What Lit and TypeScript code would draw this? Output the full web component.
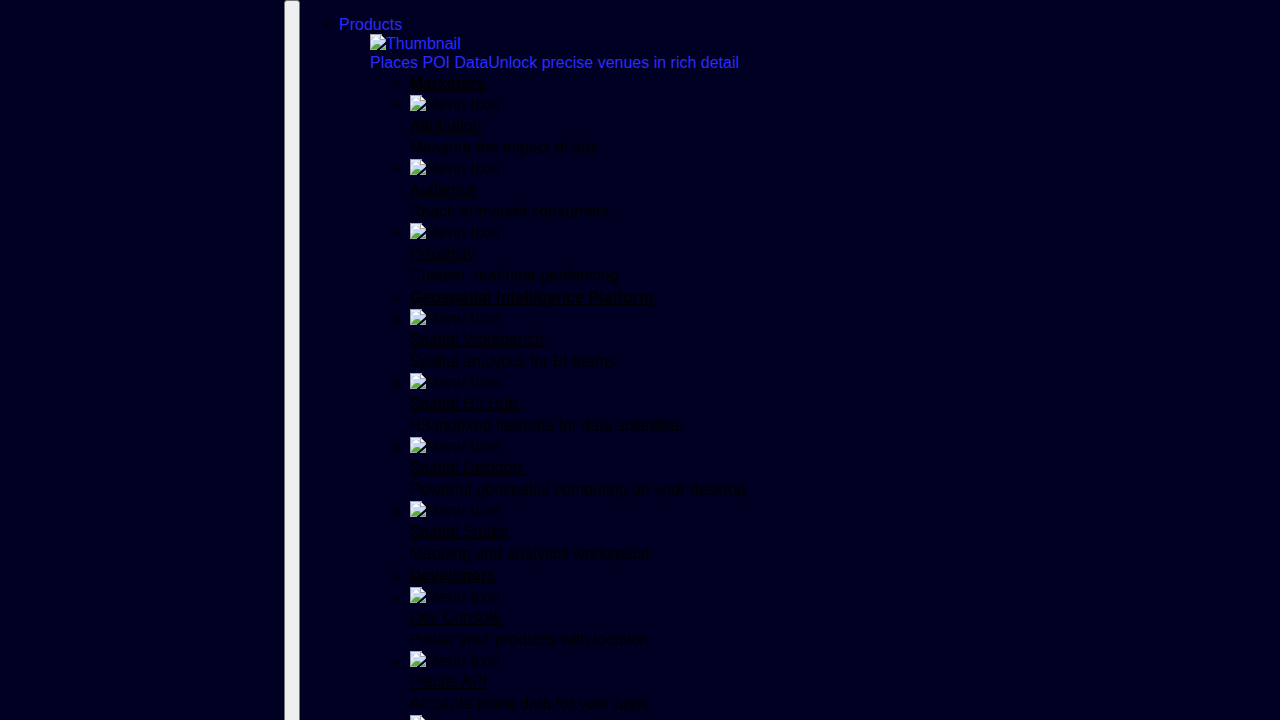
import { LitElement, html, css, svg, nothing } from "lit";
import { customElement } from "lit/decorators.js";

interface Entry {
  title?: string;
  text?: string;
}

interface Group {
  heading: string;
  entries: Entry[];
}

const GROUPS: Group[] = [
  {
    heading: "Marketers",
    entries: [
      { title: "Attribution", text: "Measure the impact of ads" },
      { title: "Audience", text: "Reach in-market consumers" },
      { title: "Proximity", text: "Custom, real-time geofencing" },
    ],
  },
  {
    heading: "Geospatial Intelligence Platform",
    entries: [
      { title: "Spatial Workbench\u00a0", text: "Spatial analytics for BI teams" },
      { title: "Spatial H3 Hub\u00a0", text: "H3-indexed features for data scientists" },
      { title: "Spatial Desktop\u00a0", text: "Powerful geospatial computing on your desktop" },
      { title: "Spatial Studio", text: "Mapping and analytics workspace" },
    ],
  },
  {
    heading: "Developers",
    entries: [
      { title: "Dev Console", text: "Power your products with location" },
      { title: "Places API", text: "Accurate place data for your apps" },
      {},
    ],
  },
];

@customElement("missing-image")
export class MissingImage extends LitElement {
  static styles = css`
    :host {
      display: inline-block;
      width: 16px;
      height: 16px;
      vertical-align: -1px;
    }
    .glyph {
      display: block;
      width: 16px;
      height: 16px;
    }
  `;

  render() {
    return html`<svg class="glyph" viewBox="0 0 16 16" aria-hidden="true" shape-rendering="crispEdges">
      ${svg`
        <path fill="#c6d9f8" shape-rendering="auto" d="M1 1h10v5h4v2.500L7.500 15H1z"/>
        <path fill="#dfe9fb" d="M1 1h10v2H1zM1 6h2v4H1z"/>
        <path fill="#fff" d="M3 6V5h1V4h1V3h2v1h1v1h1v1z"/>
        <path fill="#54ad35" shape-rendering="auto" d="M1 15c1.500-3 3.800-5 6.300-5 1.500 0 2.700.500 3.400 1.500L7.500 15z"/>
        <path fill="#a5a5a5" d="M0 0h12v1H1v14h6v1H0z"/>
        <path fill="#a5a5a5" d="M11 1h1v1h1v1h1v1h1v1h1v3h-1V6h-5V1z"/>
        <path fill="#fff" d="M11 2h1v1h1v1h1v1h-3z"/>
        <path fill="#c6d9f8" shape-rendering="auto" d="M15 11.500V15h-4z"/>
        <path fill="#54ad35" shape-rendering="auto" d="M15 13v2h-4z"/>
        <path fill="#a5a5a5" d="M15 11h1v5h-6v-1h5z"/>
      `}
    </svg>`;
  }
}

@customElement("app-root")
export class AppRoot extends LitElement {
  static styles = css`
    :host {
      display: flex;
      justify-content: center;
      height: 100vh;
      overflow: hidden;
      background: #000023;
      color: #000;
      font: 16px/19px "Liberation Sans", Arial, sans-serif;
    }
    .bar {
      display: flex;
      width: 100%;
      max-width: 712px;
      height: max-content;
    }
    .toggle {
      flex: none;
      box-sizing: border-box;
      width: 16px;
      padding: 0;
      border: 1px solid #767676;
      border-radius: 3px;
      background: #efefef;
    }
    .nav {
      flex: 1;
      min-width: 0;
    }
    .menu {
      margin: 16px 0;
      padding-left: 39px;
      list-style: disc;
    }
    .product {
      line-height: 18px;
    }
    .link {
      color: #2b2bff;
      text-decoration: none;
    }
    .panel {
      padding-left: 31px;
      line-height: 19px;
    }
    .feature,
    .row {
      display: block;
    }
    .groups {
      margin: 0;
      padding-left: 40px;
      list-style: circle;
    }
    .heading {
      padding-top: 2px;
      line-height: 20px;
      font-weight: bold;
    }
    .heading-link,
    .title {
      color: inherit;
      text-decoration: underline;
    }
    .entry {
      line-height: 21px;
    }
    .title {
      display: table;
    }
    .text {
      margin: 0;
      padding-top: 2px;
      line-height: 20px;
    }
  `;

  render() {
    return html`
      <div class="bar">
        <button class="toggle" type="button" aria-label="Menu"></button>
        <nav class="nav">
          <ul class="menu">
            <li class="product">
              <a class="link" href="#products">Products</a>
              <div class="panel">
                <a class="link feature" href="#places">
                  <span class="row"><missing-image></missing-image>Thumbnail</span>
                  <span class="row">Places POI DataUnlock precise venues in rich detail</span>
                </a>
                <ul class="groups">
                  ${GROUPS.map(
                    (group) => html`
                      <li class="heading"><a class="heading-link" href="#group">${group.heading}</a></li>
                      ${group.entries.map(
                        (entry) => html`
                          <li class="entry">
                            <missing-image></missing-image>Menu Icon
                            ${entry.title ? html`<a class="title" href="#entry">${entry.title}</a>` : nothing}
                            ${entry.text ? html`<p class="text">${entry.text}</p>` : nothing}
                          </li>
                        `
                      )}
                    `
                  )}
                </ul>
              </div>
            </li>
          </ul>
        </nav>
      </div>
    `;
  }
}
